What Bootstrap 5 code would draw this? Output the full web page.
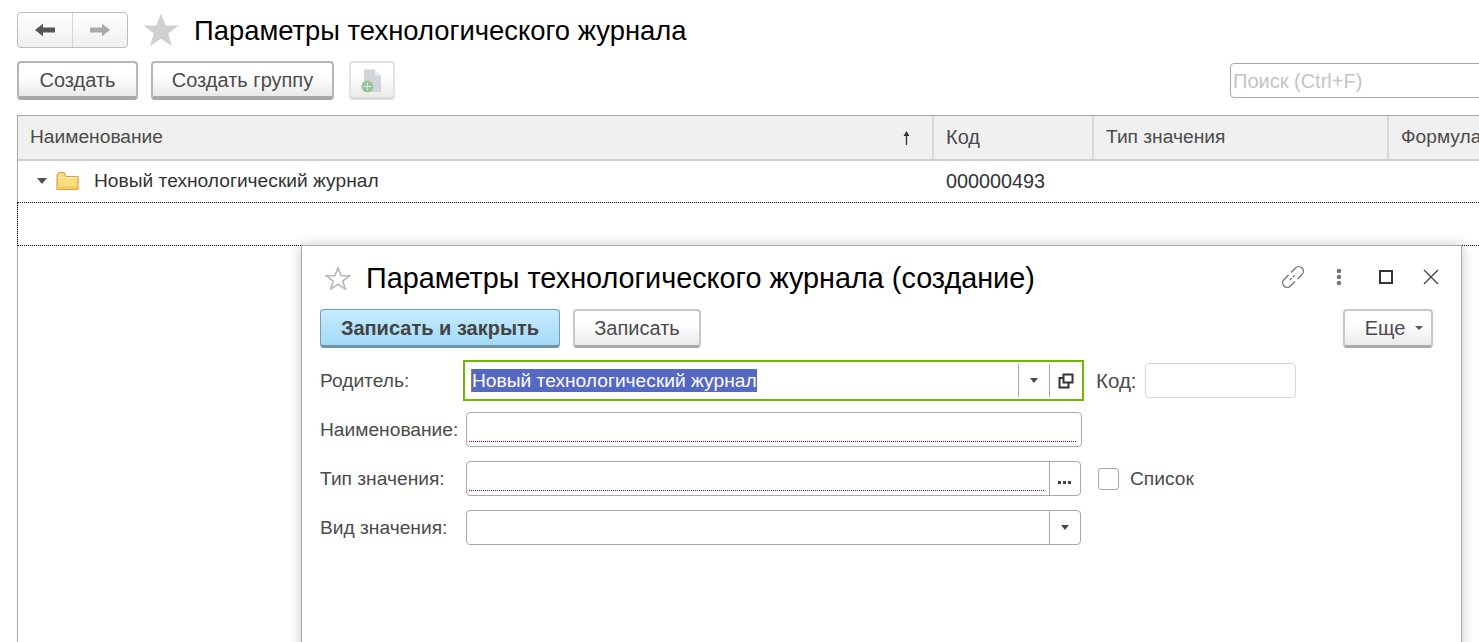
<!DOCTYPE html>
<html lang="ru">
<head>
<meta charset="utf-8">
<title>Параметры технологического журнала</title>
<link href="https://cdn.jsdelivr.net/npm/bootstrap@5.3.0/dist/css/bootstrap.min.css" rel="stylesheet">
<style>
html,body{height:642px;overflow:hidden}
body{position:relative;background:#fff;font-family:"Liberation Sans",Arial,sans-serif;font-size:19.2px;color:#4b4b4b;line-height:22px}
.page-area{padding:12px 0 0 17px;width:1479px;height:642px;overflow:hidden}
.nav-pair{width:111px;height:36px;border:1px solid #bdbdbd;border-radius:4px;background:linear-gradient(#fff,#efefef)}
.nav-pair>div{flex:1;display:flex;align-items:center;justify-content:center}
.nav-pair>div+div{border-left:1px solid #d5d5d5}
.page-title{font-size:27.4px;line-height:35px;color:#000;margin-left:15px;padding-top:1px}
.big-star{margin-left:15px}
.cmd-row{margin-top:13px;height:39px}
.cmd{height:39px;padding:0;border:2px solid #b5b5b5;border-bottom-width:4px;border-bottom-color:#a8a8a8;border-radius:4px;background:linear-gradient(#fff 40%,#e9e9e9);font-size:20px;line-height:22px;color:#4b4b4b;display:flex;align-items:center;justify-content:center}
.cmd.narrow{border-width:2px;border-bottom-width:3px;border-color:#c8c8c8;border-bottom-color:#aaa}
.cmd.icon-cmd{width:46px;border-color:#e2e2e2;border-bottom-color:#dcdcdc;margin-left:15px}
.second-cmd{width:183px;margin-left:13px}
.search-box{width:260px;height:35px;margin:2px -11px 0 0;border:1px solid #a8a8a8;border-radius:4px;color:#c4c4c4;padding:6px 2px;line-height:22px;font-size:20px}
.grid-box{margin-top:15px;width:1470px;border-left:1px solid #a8a8a8;border-top:1px solid #a8a8a8;height:600px}
.grid-head{height:45px;background:#f0f0f0;border-bottom:2px solid #cfcfcf}
.grid-head>div{border-right:2px solid #d8d8d8;padding:10px 12px 0;height:43px}
.c1{width:916px;flex:none}
.c2{width:160px;flex:none}
.c3{width:295px;flex:none}
.c4{width:110px;flex:none;white-space:nowrap}
.grid-head .c4{border-right:0}
.grid-head .c1{padding-right:21px}
.wide-txt{font-size:20px}
.grid-row{height:41px;color:#333}
.grid-row .c1{padding:9px 0 0 19px;display:flex;align-items:flex-start}
.grid-row .c2{padding:9px 12px 0;font-size:19.8px}
.twist{margin:8px 9px 0 0}
.folder{margin-right:15px;margin-top:1px}
.grid-sel{height:44px;border-top:1px dotted #111;border-bottom:1px dotted #111;border-left:1px dotted #111;margin-left:-1px}
.sort-up{margin-top:4px}
.sheet{position:absolute;left:301px;top:245px;width:1161px;height:420px;background:#fff;border:1px solid #a8a8a8;box-shadow:0 0 12px rgba(0,0,0,.22);padding:0 0 0 18px}
.sheet-head{height:63px;align-items:center}
.small-star{margin-left:5px}
.sheet-title{font-size:28.8px;line-height:36px;color:#000;margin-left:15px}
.win-tools{position:absolute;right:22px;top:18px}
.sheet-cmds{height:39px}
.sheet-cmds .cmd{margin-right:13px}
.cmd.primary-cmd{width:240px;background:linear-gradient(#c6ecff,#a3daf7);border:1px solid #7b9db1;border-bottom-width:3px;border-bottom-color:#6f92a8;font-weight:700;color:#444}
.save-cmd{width:128px}
.cmd.more-cmd{position:absolute;left:1041px;top:63px;width:90px;margin:0;padding:0 0 0 12px}
.caret-d{display:inline-block;width:0;height:0;border:4px solid transparent;border-top:4px solid #555;border-bottom:0;margin-left:10px}
.form-rows{padding-top:12px}
.f-row{align-items:center}
.f-label{width:146px;flex:none;color:#4b4b4b}
.r1{height:41px}
.r2{height:35px;margin-top:11px}
.r3{height:35px;margin-top:14px}
.r4{height:35px;margin-top:14px}
.focus-field{width:621px;height:41px;border:2px solid #6cba00;margin-left:-3px;display:flex;align-items:center;padding:0 0 0 6px}
.sel-text{background:#5468c4;color:#fff;line-height:23px;border-left:1px solid #a5822a;white-space:nowrap;flex:none}
.spacer{flex:1}
.v-btn{border-left:1px solid #a8a8a8;height:33px;width:31px;flex:none;display:flex;align-items:center;justify-content:center}
.focus-field .v-btn+.v-btn{width:33px}
.dd{display:block;width:0;height:0;border:4.5px solid transparent;border-top:5px solid #4b4b4b;border-bottom:0}
.code-label{margin-left:12px;width:49px;flex:none;font-size:20.5px}
.code-box{width:151px;height:35px;border:1px solid #d6d6d6;border-radius:4px}
.plain-field{height:35px;border:1px solid #a8a8a8;border-radius:4px;display:flex;align-items:stretch;position:relative}
.w-a{width:616px}
.w-b{width:615px}
.need{flex:1;margin:0 5px 4px 2px;border-bottom:1px dotted #c00000}
.dots-ic{margin-top:6px}
.check-box{width:21px;height:22px;border:1px solid #a8a8a8;border-radius:3px;margin-left:17px;flex:none}
.check-text{margin-left:11px}
</style>
</head>
<body>
<div class="page-area">
  <div class="d-flex align-items-center">
    <div class="nav-pair d-flex">
      <div><svg width="22" height="14" viewBox="0 0 22 14"><path d="M1 7 9 .8V4.500H21V9.500H9V13.200Z" fill="#555"/></svg></div>
      <div><svg width="22" height="14" viewBox="0 0 22 14"><path d="M21 7 13 .8V4.500H1V9.500H13V13.200Z" fill="#aaa"/></svg></div>
    </div>
    <svg class="big-star" width="36" height="34" viewBox="0 0 36 34"><path d="M18 .5 22.7 12.6H35.5L25.2 20.5 29 33.2 18 25.8 7 33.2 10.8 20.5.5 12.6H13.3Z" fill="#d0d0d0"/></svg>
    <div class="page-title">Параметры технологического журнала</div>
  </div>
  <div class="cmd-row d-flex">
    <div class="cmd" style="width:121px">Создать</div>
    <div class="cmd second-cmd">Создать группу</div>
    <div class="cmd narrow icon-cmd">
      <svg width="22" height="26" viewBox="0 0 22 26"><path d="M3 2.500H14L20 8.500V25H3Z" fill="#d2d6da"/><path d="M14 2.500V8.500H20Z" fill="#eceef0"/><circle cx="6.500" cy="19.500" r="6" fill="#9cc29c"/><path d="M6.500 15.500V23.500M2.500 19.500H10.500" stroke="#dbe9db" stroke-width="1"/></svg>
    </div>
    <div class="flex-grow-1"></div>
    <div class="search-box">Поиск (Ctrl+F)</div>
  </div>
  <div class="grid-box">
    <div class="grid-head d-flex">
      <div class="c1 d-flex justify-content-between"><span>Наименование</span><svg class="sort-up" width="9" height="16" viewBox="0 0 9 16"><path d="M4.500 3V15" stroke="#333" stroke-width="1.300"/><path d="M4.500 1 7.500 6H1.500Z" fill="#333"/></svg></div>
      <div class="c2 wide-txt">Код</div>
      <div class="c3">Тип значения</div>
      <div class="c4">Формула</div>
    </div>
    <div class="grid-row d-flex">
      <div class="c1">
        <svg class="twist" width="10" height="6" viewBox="0 0 10 6"><path d="M0 0H10L5 6Z" fill="#555"/></svg>
        <svg class="folder" width="23" height="20" viewBox="0 0 23 20"><path d="M1 4V18.500H22V5.500H10L8 1.500H3Z" fill="#f9dc7e" stroke="#d9a24a" stroke-width="1.200" stroke-linejoin="round"/><path d="M1.600 15H21.400V18H1.600Z" fill="#f5ca5e"/><path d="M1.600 6.500H21.400" stroke="#fdf0bd"/></svg>
        <span>Новый технологический журнал</span>
      </div>
      <div class="c2">000000493</div>
    </div>
    <div class="grid-sel"></div>
  </div>
</div>

<div class="sheet">
  <div class="sheet-head d-flex">
    <svg class="small-star" width="26" height="24" viewBox="0 0 28 26"><path d="M14 2 17.400 10.600H26.500L19.200 16.300 21.800 25 14 19.800 6.200 25 8.800 16.300 1.500 10.600H10.600Z" fill="#fff" stroke="#b5bac0" stroke-width="1.800"/></svg>
    <div class="sheet-title">Параметры технологического журнала (создание)</div>
  </div>
  <div class="win-tools d-flex align-items-center">
    <svg width="26" height="26" viewBox="0 0 26 26" fill="none" stroke="#777" stroke-width="1.400"><path d="M11 8.500 15.500 4A4.200 4.200 0 0 1 22 10.500L17.500 15"/><path d="M15 17.500 10.500 22A4.200 4.200 0 0 1 4 15.500L8.500 11"/><path d="M10 16 16 10" stroke-dasharray="2.500 1.500"/></svg>
    <svg width="6" height="18" viewBox="0 0 6 18" style="margin-left:30px"><circle cx="3" cy="3" r="2.300" fill="#777"/><circle cx="3" cy="9" r="2.300" fill="#777"/><circle cx="3" cy="15" r="2.300" fill="#777"/></svg>
    <svg width="14" height="14" viewBox="0 0 14 14" style="margin-left:37px"><rect x="1" y="1" width="12" height="12" fill="none" stroke="#333" stroke-width="2"/></svg>
    <svg width="16" height="16" viewBox="0 0 16 16" style="margin-left:30px"><path d="M1 1 15 15M15 1 1 15" stroke="#444" stroke-width="1.300"/></svg>
  </div>
  <div class="sheet-cmds d-flex">
    <div class="cmd primary-cmd">Записать и закрыть</div>
    <div class="cmd narrow save-cmd">Записать</div>
    <div class="cmd narrow more-cmd">Еще<span class="caret-d"></span></div>
  </div>
  <div class="form-rows">
    <div class="f-row d-flex r1">
      <div class="f-label">Родитель:</div>
      <div class="focus-field">
        <span class="sel-text">Новый технологический журнал</span>
        <span class="spacer"></span>
        <span class="v-btn"><span class="dd"></span></span>
        <span class="v-btn"><svg width="16" height="16" viewBox="0 0 16 16" fill="none" stroke="#333" stroke-width="2"><path d="M5.500 1.500H14.500V9.500H5.500Z"/><path d="M5.500 5H1.500V14.500H10.500V10"/></svg></span>
      </div>
      <div class="code-label">Код:</div>
      <div class="code-box"></div>
    </div>
    <div class="f-row d-flex r2">
      <div class="f-label">Наименование:</div>
      <div class="plain-field w-a"><span class="need"></span></div>
    </div>
    <div class="f-row d-flex r3">
      <div class="f-label">Тип значения:</div>
      <div class="plain-field w-b"><span class="need"></span><span class="v-btn"><svg class="dots-ic" width="14" height="4" viewBox="0 0 14 4"><path d="M0 1H3V4H0ZM5 1H8V4H5ZM10 1H13V4H10Z" fill="#444"/></svg></span></div>
      <div class="check-box"></div>
      <div class="check-text">Список</div>
    </div>
    <div class="f-row d-flex r4">
      <div class="f-label">Вид значения:</div>
      <div class="plain-field w-b"><span class="spacer"></span><span class="v-btn"><span class="dd"></span></span></div>
    </div>
  </div>
</div>
<script src="https://cdn.jsdelivr.net/npm/bootstrap@5.3.0/dist/js/bootstrap.bundle.min.js"></script>
</body>
</html>
